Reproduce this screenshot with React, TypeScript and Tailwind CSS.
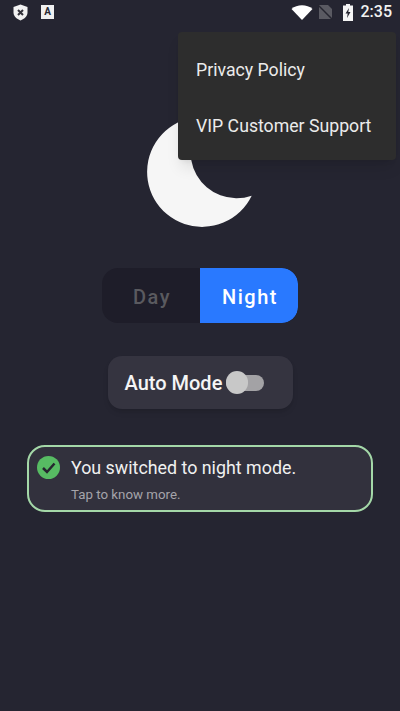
import React from 'react';

function StatusBar() {
  return (
    <div className="flex h-6 items-center justify-between pl-[13px] pr-[8px]">
      <div className="flex items-center gap-[13px]">
        <svg width="15" height="17" viewBox="0 0 15 17">
          <path d="M7.5 0.5 L14.5 3 V8.5 C14.5 12 11.5 15 7.5 16.5 C3.5 15 0.5 12 0.5 8.5 V3 Z" fill="#f2f2f2" />
          <path d="M5 6 L10 11 M10 6 L5 11" stroke="#33323a" strokeWidth="2" />
        </svg>
        <div className="flex h-[14px] w-[13px] items-center justify-center bg-[#f0f0f0] text-[10px] leading-none font-bold text-[#2a2a34]">A</div>
      </div>
      <div className="flex items-center">
        <svg width="22" height="15" viewBox="0 0 22 15">
          <path d="M0.5 4 C6 -1 16 -1 21.5 4 L11 15 Z" fill="#ffffff" />
        </svg>
        <svg className="ml-[5px]" width="15" height="16" viewBox="0 0 15 16">
          <path d="M1 1 H10 L14 5 V15 H1 Z" fill="#5a5a62" />
          <path d="M0 1 L15 16" stroke="#25252f" strokeWidth="1.5" />
        </svg>
        <svg className="ml-[10px]" width="10" height="17" viewBox="0 0 10 17">
          <path d="M3 0 H7 V1.5 H10 V17 H0 V1.5 H3 Z" fill="#f5f5f5" />
          <path d="M6 4 L2.5 9.5 H4.7 L4 14 L7.5 8 H5.3 Z" fill="#25252f" />
        </svg>
        <span className="ml-[8px] text-[16px] font-medium text-[#f2f2f2]">2:35</span>
      </div>
    </div>
  );
}

export default function App() {
  return (
    <div className="relative flex h-[711px] w-[400px] flex-col overflow-hidden bg-[#252531] font-['Roboto','Liberation_Sans',sans-serif]">
      <StatusBar />

      <div className="flex flex-col items-center">
        <svg className="mt-[93px] ml-[4px]" width="110" height="110" viewBox="0 0 110 110">
          <path d="M59.9 0.1 A55 55 0 1 0 104.7 78.7 A46 46 0 0 1 59.9 0.1 Z" fill="#f6f6f6" />
        </svg>

        <div className="mt-[41px] flex h-[55px] w-[196px] overflow-hidden rounded-[16px] bg-[#1e1d29] text-[20px] font-medium tracking-[1.5px]">
          <div className="flex w-[98px] items-center justify-center pt-[2px] pl-[2px] text-[#5a5a5f]">Day</div>
          <div className="flex w-[98px] items-center justify-center rounded-r-[16px] bg-[#2979ff] pt-[2px] pl-[2px] text-white">Night</div>
        </div>

        <div className="mt-[33px] flex h-[53px] w-[185px] items-center rounded-[14px] bg-[#353440] pt-[1px] pl-[17px] shadow-md">
          <span className="text-[20px] font-medium text-[#f5f5f5]">Auto Mode</span>
          <div className="relative ml-[4px] h-[16px] w-[38px] rounded-full bg-[#a3a2a5]">
            <div className="absolute top-[-4px] left-0 h-[23px] w-[22px] rounded-full bg-[#c8c8c8]" />
          </div>
        </div>

        <div className="mt-[36px] flex h-[67px] w-[346px] rounded-[18px] border-2 border-[#a4d8a8] bg-[#32313d] pt-[9px] pl-[8px]">
          <svg width="23" height="23" viewBox="0 0 23 23">
            <circle cx="11.5" cy="11.5" r="11.5" fill="#57bb63" />
            <path d="M6 12 L10 16 L17.5 7.5" fill="none" stroke="#26262f" strokeWidth="2.5" />
          </svg>
          <div className="ml-[11px]">
            <div className="text-[17.85px] leading-[24px] text-[#f0f0f0]">You switched to night mode.</div>
            <div className="mt-[6px] text-[13.3px] leading-[18px] text-[#a5a4aa]">Tap to know more.</div>
          </div>
        </div>
      </div>

      <div className="absolute top-[32px] left-[178px] flex h-[128px] w-[218px] flex-col rounded-[4px] bg-[#2d2d2d] pl-[18px] text-[17.7px] text-[#ebebeb] shadow-lg">
        <div className="mt-[10px] flex h-[56px] items-center">Privacy Policy</div>
        <div className="flex h-[56px] items-center">VIP Customer Support</div>
      </div>
    </div>
  );
}
